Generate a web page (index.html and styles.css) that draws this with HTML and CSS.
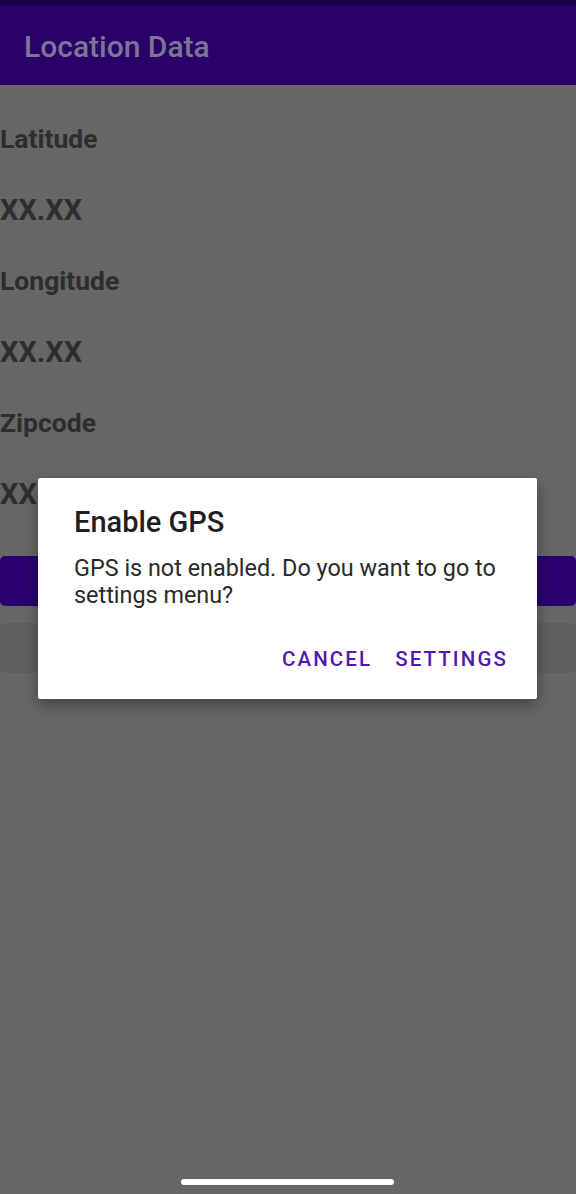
FILE: index.html
```html
<!DOCTYPE html>
<html>
<head>
<meta charset="utf-8">
<link rel="stylesheet" href="styles.css">
</head>
<body>
<div class="status"></div>
<header class="appbar"><span class="apptitle">Location Data</span></header>
<main class="content">
  <div class="label">Latitude</div>
  <div class="value">XX.XX</div>
  <div class="label">Longitude</div>
  <div class="value">XX.XX</div>
  <div class="label">Zipcode</div>
  <div class="value">XX</div>
  <div class="btn primary"></div>
  <div class="btn secondary"></div>
</main>
<div class="dialog">
  <div class="dtitle">Enable GPS</div>
  <div class="dbody">GPS is not enabled. Do you want to go to settings menu?</div>
  <div class="dactions">
    <span class="dbtn">CANCEL</span>
    <span class="dbtn">SETTINGS</span>
  </div>
</div>
<div class="homebar"></div>
</body>
</html>
```
FILE: styles.css
```css
html, body {
  margin: 0;
  padding: 0;
}
body {
  width: 576px;
  height: 1194px;
  background: #666666;
  font-family: Roboto, "Liberation Sans", sans-serif;
  position: relative;
  overflow: hidden;
}
.status {
  height: 5px;
  background: #1a0046;
}
.appbar {
  height: 80px;
  background: #2a0068;
  display: flex;
  align-items: center;
  padding-left: 24px;
  box-sizing: border-box;
}
.apptitle {
  color: #7c7594;
  font-size: 30px;
  font-weight: 500;
  margin-top: 2px;
}
.content {
  padding-top: 19px;
  display: flex;
  flex-direction: column;
}
.label {
  height: 70px;
  line-height: 70px;
  font-size: 26.5px;
  font-weight: 700;
  color: #2e2e2e;
}
.value {
  height: 72px;
  line-height: 72px;
  font-size: 29px;
  font-weight: 700;
  color: #2e2e2e;
}
.btn {
  height: 50px;
  border-radius: 5px;
}
.primary {
  margin-top: 26px;
  background: #2a006c;
}
.secondary {
  margin-top: 17px;
  background: #5f5f5f;
}
.dialog {
  position: absolute;
  left: 38px;
  top: 478px;
  width: 499px;
  height: 221px;
  background: #ffffff;
  border-radius: 2px;
  box-shadow: 0 6px 16px rgba(0,0,0,0.35);
  box-sizing: border-box;
  padding: 24px 30px 0 36px;
  display: flex;
  flex-direction: column;
}
.dtitle {
  font-size: 29px;
  font-weight: 500;
  color: #1f1f1f;
  line-height: 40px;
}
.dbody {
  margin-top: 13px;
  font-size: 23.4px;
  line-height: 27px;
  color: #2a2a2a;
}
.dactions {
  margin-top: 38px;
  display: flex;
  justify-content: flex-end;
  gap: 23px;
  margin-right: -1px;
}
.dbtn {
  font-size: 20.5px;
  font-weight: 500;
  letter-spacing: 2.1px;
  color: #5317ad;
  line-height: 24px;
}
.homebar {
  position: absolute;
  left: 181px;
  top: 1179px;
  width: 213px;
  height: 6px;
  border-radius: 3px;
  background: #ffffff;
}
```
